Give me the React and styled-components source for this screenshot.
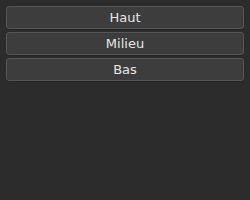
import React from 'react'
import styled, {createGlobalStyle} from 'styled-components'

const Global = createGlobalStyle`
  html, body {
    margin: 0;
    padding: 0;
    background: #2c2c2c;
  }
`

const Panel = styled.div`
  width: 250px;
  height: 200px;
  box-sizing: border-box;
  padding: 6px 6px;
  display: flex;
  flex-direction: column;
  gap: 3px;
  background: #2c2c2c;
`

const Button = styled.div`
  height: 23px;
  box-sizing: border-box;
  display: flex;
  align-items: center;
  justify-content: center;
  background: #3d3d3d;
  border: 1px solid #565656;
  border-radius: 3px;
  box-shadow: 0 1px 0 #232323;
  color: #e6e6e6;
  font-family: 'DejaVu Sans', sans-serif;
  font-size: 13px;
`

export default function App() {
  return (
    <>
      <Global />
      <Panel>
        <Button>Haut</Button>
        <Button>Milieu</Button>
        <Button>Bas</Button>
      </Panel>
    </>
  )
}
